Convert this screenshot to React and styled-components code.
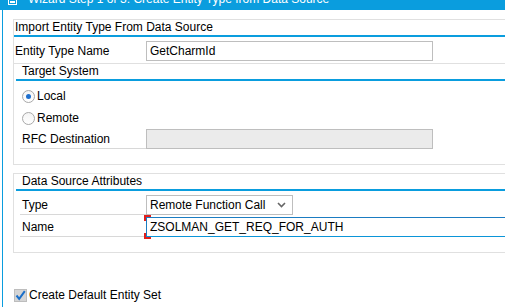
import React from "react";
import styled, { createGlobalStyle } from "styled-components";

const Global = createGlobalStyle`
  html, body { margin: 0; padding: 0; background: #ffffff; }
  body { width: 505px; height: 307px; overflow: hidden; font-family: "Liberation Sans", Arial, sans-serif; font-size: 12px; color: #000; }
  * { box-sizing: border-box; }
`;

const BLUE = "#0a9dde";

const Page = styled.div`
  width: 505px;
  height: 307px;
  overflow: hidden;
  display: flex;
  flex-direction: column;
`;

const TitleBar = styled.div`
  height: 10px;
  flex: none;
  background: ${BLUE};
  overflow: hidden;
`;

const TitleInner = styled.div`
  height: 16px;
  margin-top: -9px;
  display: flex;
  align-items: center;
  gap: 11px;
  padding-left: 8px;
  color: #ffffff;
  line-height: 16px;
  white-space: nowrap;
`;

const Body = styled.div`
  flex: 1;
  margin-left: 2px;
  border-left: 1px solid ${BLUE};
  padding: 9px 0 0 10px;
  display: flex;
  flex-direction: column;
  overflow: hidden;
`;

const Group = styled.div`
  flex: none;
  margin-right: -40px;
  border-top: 1px solid #e0e0e0;
  border-left: 1px solid #e0e0e0;
  border-bottom: ${(p) => (p.$closed ? "1px solid #e0e0e0" : "none")};
  padding: 0 0 ${(p) => p.$pb || 0}px ${(p) => p.$indent || 0}px;
  margin-top: ${(p) => p.$mt || 0}px;
  display: flex;
  flex-direction: column;
`;

const Header = styled.div`
  height: 17px;
  flex: none;
  border-bottom: 2px solid ${BLUE};
  padding-left: ${(p) => p.$pl || 1}px;
  display: flex;
  align-items: center;
  line-height: 15px;
  white-space: nowrap;
`;

const Row = styled.div`
  flex: none;
  display: flex;
  align-items: flex-start;
  height: ${(p) => p.$h || 20}px;
  margin-top: ${(p) => p.$mt || 0}px;
  padding-top: ${(p) => p.$pt || 0}px;
  padding-left: ${(p) => p.$pl || 0}px;
`;

const Label = styled.div`
  width: ${(p) => p.$w}px;
  height: 20px;
  flex: none;
  display: flex;
  align-items: center;
  padding-left: ${(p) => p.$pl || 0}px;
  border-bottom: ${(p) => (p.$line ? "1px solid #d8d8d8" : "none")};
  white-space: nowrap;
`;

const Input = styled.div`
  width: ${(p) => p.$w}px;
  height: 20px;
  flex: none;
  border: 1px solid #bebebe;
  background: ${(p) => (p.$disabled ? "#ebebeb" : "#ffffff")};
  padding-left: 3px;
  display: flex;
  align-items: center;
  white-space: nowrap;
`;

const FocusWrap = styled.div`
  position: relative;
  flex: none;
  &::before, &::after {
    content: "";
    position: absolute;
    left: -2px;
    width: 5px;
    height: 4px;
    border-left: 2px solid #e0201c;
  }
  &::before { top: -2px; border-top: 2px solid #e0201c; }
  &::after { bottom: -2px; border-bottom: 2px solid #e0201c; }
`;

const FocusInput = styled(Input)`
  border: 1px solid #1b7cc2;
  border-bottom-color: #0b95d8;
`;

const Select = styled(Input)`
  justify-content: space-between;
  padding-right: 6px;
`;

const RadioRow = styled.div`
  flex: none;
  height: 22px;
  display: flex;
  align-items: center;
  padding-left: 6px;
  gap: 2px;
`;

const RadioCircle = styled.span`
  width: 13px;
  height: 13px;
  border-radius: 50%;
  border: 1px solid #a8a8a8;
  background: linear-gradient(#f4f4f4, #ffffff);
  display: flex;
  align-items: center;
  justify-content: center;
  &::after {
    content: "";
    width: 5px;
    height: 5px;
    border-radius: 50%;
    background: ${(p) => (p.$checked ? "#1e6fce" : "transparent")};
  }
`;

const CheckRow = styled.div`
  flex: none;
  display: flex;
  align-items: center;
  gap: 2px;
  margin-top: 35px;
  padding-left: 1px;
`;

const CheckBox = styled.span`
  width: 13px;
  height: 13px;
  background: #d5d5d5;
  border: 1px solid #bdbdbd;
  display: flex;
  align-items: center;
  justify-content: center;
`;

const Chevron = () => (
  <svg width="9" height="6" viewBox="0 0 9 6">
    <path d="M1 1 L4.5 4.5 L8 1" fill="none" stroke="#666" strokeWidth="1.6" />
  </svg>
);

export default function App() {
  return (
    <Page>
      <Global />
      <TitleBar>
        <TitleInner>
          <svg width="9" height="12" viewBox="0 0 9 12">
            <rect x="0.5" y="0.5" width="8" height="11" fill="none" stroke="#fff" />
            <rect x="2" y="8" width="5" height="2" fill="#fff" />
          </svg>
          <span>Wizard Step 1 of 3: Create Entity Type from Data Source</span>
        </TitleInner>
      </TitleBar>
      <Body>
        <Group>
          <Header>Import Entity Type From Data Source</Header>
          <Row $h={26} $pt={4} $pl={1}>
            <Label $w={131}>Entity Type Name</Label>
            <Input $w={287}>GetCharmId</Input>
          </Row>
        </Group>
        <Group $closed $indent={2} $pb={15}>
          <Header $pl={6}>Target System</Header>
          <Row $h={4} />
          <RadioRow>
            <RadioCircle $checked />
            <span>Local</span>
          </RadioRow>
          <RadioRow>
            <RadioCircle />
            <span>Remote</span>
          </RadioRow>
          <Row $pl={4}>
            <Label $w={126} $pl={2} $line>RFC Destination</Label>
            <Input $w={287} $disabled />
          </Row>
        </Group>
        <Group $closed $indent={2} $pb={15} $mt={8}>
          <Header $pl={6}>Data Source Attributes</Header>
          <Row $mt={4} $pl={4}>
            <Label $w={126} $pl={2} $line>Type</Label>
            <Select $w={147}>
              <span>Remote Function Call</span>
              <Chevron />
            </Select>
          </Row>
          <Row $mt={2} $pl={4}>
            <Label $w={126} $pl={2} $line>Name</Label>
            <FocusWrap>
              <FocusInput $w={400}>ZSOLMAN_GET_REQ_FOR_AUTH</FocusInput>
            </FocusWrap>
          </Row>
        </Group>
        <CheckRow>
          <CheckBox>
            <svg width="11" height="11" viewBox="0 0 11 11">
              <path d="M1.5 5.5 L4.2 8.8 L9.8 1.2" fill="none" stroke="#1a6fc9" strokeWidth="2" />
            </svg>
          </CheckBox>
          <span>Create Default Entity Set</span>
        </CheckRow>
      </Body>
    </Page>
  );
}
